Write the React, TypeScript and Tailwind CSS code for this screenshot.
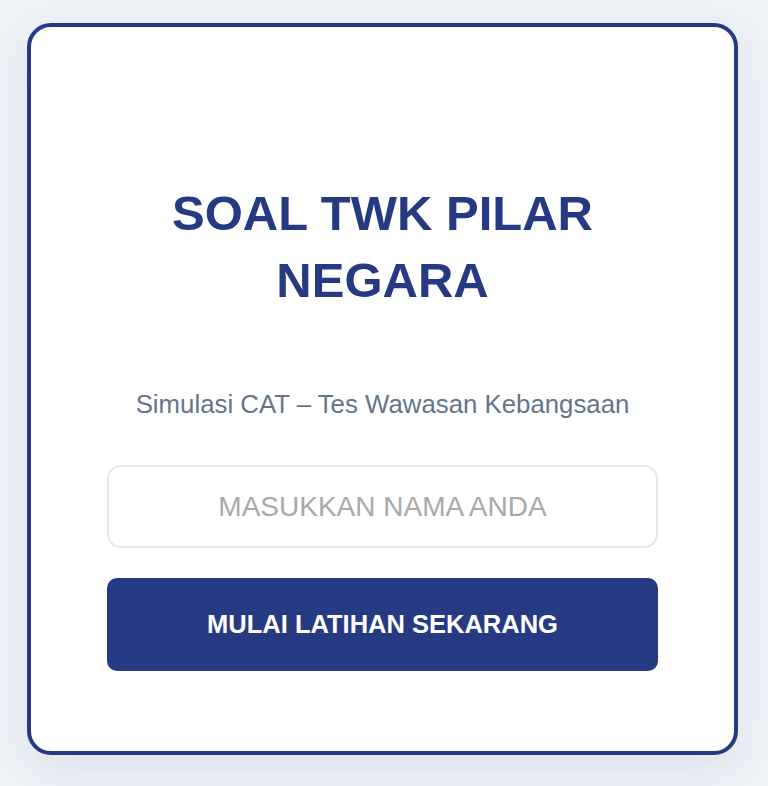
import React, { useState } from 'react';

export default function App() {
  const [name, setName] = useState('');

  return (
    <div className="min-h-screen bg-[#eef2f7] pt-[23px] pb-[31px] pl-[27px] font-['Liberation_Sans',Arial,sans-serif]">
      {/* Card */}
      <div className="w-[711px] rounded-[24px] border-4 border-[#263a84] bg-white px-[76px] pt-[153px] pb-[80px] shadow-[0_12px_40px_rgba(38,58,132,0.08)]">
        <h1 className="text-center text-[49px] font-bold leading-[67px] text-[#263a84]">
          SOAL TWK PILAR NEGARA
        </h1>

        <p className="mt-[72px] text-center text-[25.8px] leading-[37px] text-[#64748b]">
          Simulasi CAT – Tes Wawasan Kebangsaan
        </p>

        <input
          type="text"
          value={name}
          onChange={(e) => setName(e.target.value)}
          placeholder="MASUKKAN NAMA ANDA"
          className="mt-[42px] block h-[83px] w-full rounded-[14px] border-2 border-[#e2e8f0] bg-white px-4 text-center text-[28px] text-gray-800 outline-none placeholder:text-[#a9a9a9]"
        />

        <button className="mt-[30px] block h-[93px] w-full rounded-[10px] bg-[#263a84] text-[25.5px] font-bold text-white">
          MULAI LATIHAN SEKARANG
        </button>
      </div>
    </div>
  );
}
